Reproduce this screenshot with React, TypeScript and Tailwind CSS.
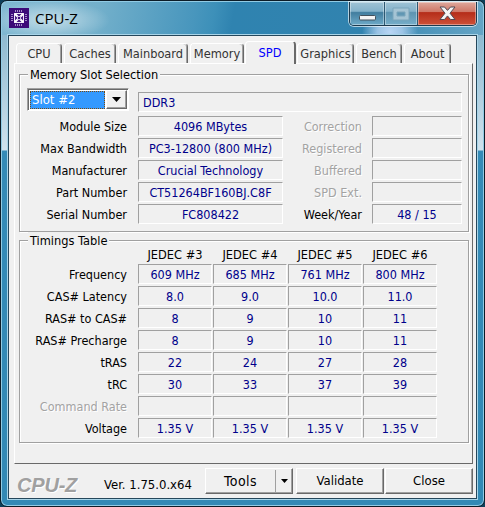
import type { ReactNode } from 'react';

const tabs = [
  { label: 'CPU', box: 'w-[46px]' },
  { label: 'Caches', box: 'w-[52px]' },
  { label: 'Mainboard', box: 'w-[70px]' },
  { label: 'Memory', box: 'w-[54px]' },
  { label: 'SPD', box: 'w-[51px]' },
  { label: 'Graphics', box: 'w-[57px]' },
  { label: 'Bench', box: 'w-[46px]' },
  { label: 'About', box: 'w-[47px]' },
];

const slotInfo = [
  ['Module Size', '4096 MBytes', 'Correction', ''],
  ['Max Bandwidth', 'PC3-12800 (800 MHz)', 'Registered', ''],
  ['Manufacturer', 'Crucial Technology', 'Buffered', ''],
  ['Part Number', 'CT51264BF160BJ.C8F', 'SPD Ext.', ''],
  ['Serial Number', 'FC808422', 'Week/Year', '48 / 15'],
];

const timings = [
  { label: 'Frequency', values: ['609 MHz', '685 MHz', '761 MHz', '800 MHz'] },
  { label: 'CAS# Latency', values: ['8.0', '9.0', '10.0', '11.0'] },
  { label: 'RAS# to CAS#', values: ['8', '9', '10', '11'] },
  { label: 'RAS# Precharge', values: ['8', '9', '10', '11'] },
  { label: 'tRAS', values: ['22', '24', '27', '28'] },
  { label: 'tRC', values: ['30', '33', '37', '39'] },
  { label: 'Command Rate', values: ['', '', '', ''] },
  { label: 'Voltage', values: ['1.35 V', '1.35 V', '1.35 V', '1.35 V'] },
];

function Field({ className, children }: { className: string; children?: ReactNode }) {
  return (
    <div
      className={`flex h-5 shrink-0 items-center border border-t-[#a0a0a0] border-r-white border-b-white border-l-[#a0a0a0] pt-px text-[#00008b] ${className}`}
    >
      {children}
    </div>
  );
}

function Label({ children, disabled, className }: { children: ReactNode; disabled?: boolean; className: string }) {
  return (
    <div
      className={`shrink-0 pt-px text-right ${disabled ? 'text-[#a3a3a3] [text-shadow:1px_1px_0_#fff]' : 'text-black'} ${className}`}
    >
      {children}
    </div>
  );
}

function Group({ title, className, children }: { title: string; className: string; children: ReactNode }) {
  return (
    <div
      className={`relative ml-1 w-[450px] border border-[#a0a0a0] shadow-[1px_1px_0_#fff,inset_1px_1px_0_#fff] ${className}`}
    >
      <span className="absolute -top-[9px] left-2 bg-[#f0f0f0] px-0.5 text-[12.7px] leading-[18px]">{title}</span>
      {children}
    </div>
  );
}

function PushButton({ className, children }: { className: string; children: ReactNode }) {
  return (
    <button
      className={`flex h-[26px] items-center justify-center border border-t-white border-r-[#696969] border-b-[#696969] border-l-white text-[13px] shadow-[inset_-1px_-1px_0_#a0a0a0] ${className}`}
    >
      {children}
    </button>
  );
}

function ChipIcon() {
  return (
    <svg width="20" height="20" viewBox="0 0 20 20" className="shrink-0">
      <rect width="20" height="20" fill="#3c0a78" />
      <path
        d="M6.500 2v2M8.500 2v2M10.500 2v2M12.500 2v2M6.500 16v2M8.500 16v2M10.500 16v2M12.500 16v2M2 6.500h2M2 8.500h2M2 10.500h2M2 12.500h2M16 6.500h2M16 8.500h2M16 10.500h2M16 12.500h2"
        stroke="#a58bc9"
      />
      <rect x="5.500" y="5.500" width="9" height="9" fill="#4b1c86" stroke="#efe8f7" />
      <path d="M6 6l2.500 2.500M14 6l-2.500 2.500M6 14l2.500-2.500M14 14l-2.500-2.500" stroke="#fff" strokeWidth="2" />
      <rect x="8.500" y="8.500" width="3" height="3" fill="#3c0a78" stroke="#d3c4e6" />
    </svg>
  );
}

function CaptionButtons() {
  return (
    <div className="mr-[6px] flex h-[24px] w-[128px] overflow-hidden rounded-b-[5px] border border-t-0 border-[#1d3a4e] shadow-[0_0_0_1px_#ffffffa0]">
      <div className="flex w-[35px] items-end justify-center border-r border-[#2c5872] bg-[linear-gradient(#9fc3d5_0%,#84b2ca_40%,#427e9f_46%,#6eaac8_100%)] pb-1 shadow-[inset_0_0_0_1px_#ffffff60]">
        <svg width="17" height="6">
          <rect x="0.5" y="0.5" width="16" height="4.5" rx="1" fill="#f4f4f4" stroke="#42515c" />
        </svg>
      </div>
      <div className="flex w-[33px] items-center justify-center border-r border-[#2c5872] bg-[linear-gradient(#9fc3d5_0%,#84b2ca_40%,#5d94b1_46%,#77aec9_100%)] shadow-[inset_0_0_0_1px_#ffffff60]">
        <svg width="18" height="14">
          <path d="M1 1h16v12H1zM5 5v4h8V5z" fill="#a5c4d4" fillRule="evenodd" stroke="#7ba5bb" />
        </svg>
      </div>
      <div className="flex flex-1 items-center justify-center bg-[linear-gradient(#dfa99d_0%,#cf7767_42%,#b52d1a_46%,#cd5138_100%)] shadow-[inset_0_0_0_1px_#ffffff60]">
        <svg width="17" height="15">
          <path
            d="M1 1h4.500l3 3.400 3-3.400H16l-5 6.200 5 6.300h-4.500l-3-3.600-3 3.600H1l5-6.300z"
            fill="#f5f5f5"
            stroke="#514a55"
          />
        </svg>
      </div>
    </div>
  );
}

function TabStrip() {
  return (
    <div className="flex h-[22px] shrink-0 items-end gap-0.5 pl-0.5 text-[12.7px]">
      {tabs.map((t) =>
        t.label === 'SPD' ? (
          <div
            key={t.label}
            className={`relative z-10 -mr-px -mb-px -ml-px flex h-[23px] shrink-0 items-center justify-center rounded-t-sm border-t border-r-2 border-l border-t-white border-r-[#696969] border-l-white bg-[#f0f0f0] text-[#0000ff] ${t.box}`}
          >
            {t.label}
          </div>
        ) : (
          <div
            key={t.label}
            className={`flex h-5 shrink-0 items-center justify-center rounded-t-sm border-t border-r border-l border-t-white border-r-[#696969] border-l-white text-[#333] shadow-[inset_-1px_0_0_#a0a0a0] ${t.box}`}
          >
            {t.label}
          </div>
        )
      )}
    </div>
  );
}

export default function App() {
  return (
    <div className="h-[507px] w-[485px] overflow-hidden bg-[#0e3f59] font-['DejaVu_Sans_Condensed','DejaVu_Sans',sans-serif] text-[12.5px] leading-[18px] whitespace-nowrap text-black [font-stretch:condensed]">
      <div className="flex h-[507px] w-[485px] flex-col rounded-[7px] border border-[#0c1c27] bg-[linear-gradient(#8abbd3_0,#8fbad0_35px,#d0e2ed_149px,#358bb7_150px,#3289b5_100%)] px-[7px] shadow-[inset_0_0_0_1px_#91cbe4]">
        <div className="-mx-[6px] mt-px flex h-[33px] shrink-0 items-start rounded-t-[6px] bg-[radial-gradient(ellipse_60px_20px_at_48px_18px,#ffffff90_0%,#ffffff00_100%),radial-gradient(ellipse_28px_22px_at_388px_30px,#b9d6f5_0%,#b9d6f5c0_45%,#b9d6f500_100%),linear-gradient(100deg,#80b8d1_0%,#73b0cb_20%,#4896bd_40%,#3d90b9_44%,#2f83b0_48%,#3183af_75%,#66a5c5_100%)]">
          <div className="mt-[6px] ml-[7px] flex h-5 flex-1 items-center gap-[6px]">
            <ChipIcon />
            <span className="font-['Open_Sans',sans-serif] text-[15px] [font-stretch:normal]">CPU-Z</span>
          </div>
          <CaptionButtons />
        </div>
        <div className="flex h-[464px] w-[469px] shrink-0 flex-col border border-[#25475b] bg-[#f0f0f0] pl-[5px] shadow-[0_0_0_1px_#a8d4e8]">
          <div className="h-[5px] shrink-0" />
          <TabStrip />
          <div className="h-[401px] w-[459px] shrink-0 border border-t-white border-r-[#696969] border-b-[#696969] border-l-white pt-[10px]">
            <Group title="Memory Slot Selection" className="h-[158px] pt-[13px]">
              <div className="flex h-6 items-start">
                <div className="ml-[7px] flex h-[23px] w-[102px] border border-t-[#a0a0a0] border-r-white border-b-white border-l-[#a0a0a0] bg-white p-px shadow-[inset_1px_1px_0_#696969]">
                  <div className="mt-px ml-px flex h-[18px] w-[75px] items-center border border-dotted border-[#7a4a10] bg-[#3399ff] pl-px text-[13px] text-white">
                    Slot #2
                  </div>
                  <div className="ml-px flex h-[19px] w-[21px] items-center justify-center border border-t-white border-r-[#696969] border-b-[#696969] border-l-white bg-[#f0f0f0] shadow-[inset_-1px_-1px_0_#a0a0a0]">
                    <svg width="9" height="5">
                      <path d="M0 0h9L4.500 5z" fill="#000" />
                    </svg>
                  </div>
                </div>
                <Field className="mt-1 ml-[9px] w-[324px] pl-1">DDR3</Field>
              </div>
              <div className="mt-1 flex flex-col gap-0.5">
                {slotInfo.map(([label, value, label2, value2]) => (
                  <div key={label} className="flex items-center">
                    <Label className="w-[107px]">{label}</Label>
                    <Field className="ml-[11px] w-[145px] justify-center">{value}</Field>
                    <Label className="w-[79px]" disabled={!value2}>
                      {label2}
                    </Label>
                    <Field className="ml-[10px] w-[90px] justify-center">{value2}</Field>
                  </div>
                ))}
              </div>
            </Group>
            <Group title="Timings Table" className="mt-2 h-[203px] pt-[4px]">
              <div className="ml-[118px] flex h-[19px] items-center gap-px">
                {['JEDEC #3', 'JEDEC #4', 'JEDEC #5', 'JEDEC #6'].map((h) => (
                  <div key={h} className="w-[74px] text-center text-[12.7px]">
                    {h}
                  </div>
                ))}
              </div>
              <div className="flex flex-col gap-0.5">
                {timings.map((row) => (
                  <div key={row.label} className="flex items-center gap-px">
                    <Label className="mr-[10px] w-[107px]" disabled={!row.values[0]}>
                      {row.label}
                    </Label>
                    {row.values.map((v, i) => (
                      <Field key={i} className="w-[74px] justify-center">
                        {v}
                      </Field>
                    ))}
                  </div>
                ))}
              </div>
            </Group>
          </div>
          <div className="mt-1 flex shrink-0 items-start">
            <span className="mt-[5px] ml-[3px] w-[87px] font-['Liberation_Sans',sans-serif] text-[20px] leading-[24px] font-bold tracking-[-0.2px] text-[#a0a0a0] italic [text-shadow:1px_1px_0_#fff]">
              CPU-Z
            </span>
            <span className="mt-2 w-[101px] text-[13px] leading-[18px]">Ver. 1.75.0.x64</span>
            <PushButton className="w-[88px]">
              <span className="flex-1 text-center text-[14px] tracking-[0.4px]">Tools</span>
              <span className="flex h-[23px] w-[17px] items-center justify-center border-l border-[#a0a0a0]">
                <svg width="7" height="4">
                  <path d="M0 0h7L3.500 4z" />
                </svg>
              </span>
            </PushButton>
            <PushButton className="ml-[3px] w-[88px]">Validate</PushButton>
            <PushButton className="ml-px w-[88px]">Close</PushButton>
          </div>
        </div>
      </div>
    </div>
  );
}
